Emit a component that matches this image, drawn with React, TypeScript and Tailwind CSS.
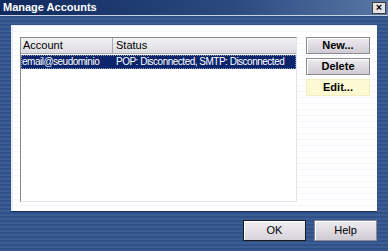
import React from 'react';

const font = { fontFamily: '"Liberation Sans", Arial, sans-serif' };

function Btn({ label, variant = 'normal', className = '' }: { label: string; variant?: 'normal' | 'hover' | 'default'; className?: string }) {
  const look =
    variant === 'hover'
      ? 'bg-[#fdf9d2] border border-[#f3eec0]'
      : variant === 'default'
        ? 'bg-[linear-gradient(#f2eff4,#d6d2da)] border border-[#1a1a1a] shadow-[inset_1px_1px_0_#fff]'
        : 'bg-[linear-gradient(#eeebf0,#cfcbd3)] border border-[#8c8a90] shadow-[inset_1px_1px_0_#fff]';
  return (
    <div className={`flex items-center justify-center text-[11px] leading-none text-black ${look} ${className}`}>
      {label}
    </div>
  );
}

export default function App() {
  return (
    <div
      className="w-[388px] h-[251px] flex flex-col overflow-hidden bg-[repeating-linear-gradient(180deg,#2f5088_0px,#2f5088_2px,#3b5d93_2px,#3b5d93_4px)]"
      style={font}
    >
      <div className="h-[16px] flex items-center justify-between pl-[3px] pr-[2px] bg-[linear-gradient(90deg,#10295e,#2a4a80_60%,#5a78a6)] border-b border-[#c8d2e2]">
        <span className="text-white font-bold text-[11px] leading-none">Manage Accounts</span>
        <div className="w-[14px] h-[12px] bg-[#e4e2e6] border border-[#404040] flex items-center justify-center text-[11px] font-bold leading-none text-black">
          ×
        </div>
      </div>

      <div className="flex-1 flex flex-col px-[11px] pt-[9px]">
        <div className="h-[186px] bg-[repeating-linear-gradient(180deg,#ffffff_0px,#ffffff_5px,#f3f6fb_5px,#f3f6fb_6px)] border-l-2 border-t border-[#e8eef8] shadow-[0_1px_0_#1c2f55] flex gap-[9px] pl-[7px] pt-[11px] pr-[7px]">
          <div className="w-[277px] h-[165px] bg-white border border-[#8a8a8a] border-b-[#dfe4ee] border-r-[#dfe4ee] flex flex-col">
            <div className="h-[16px] flex text-[11px] text-black leading-none">
              <div className="w-[92px] flex items-center pl-[2px] bg-[linear-gradient(#f2f1f4,#dcdbe0)] border-r border-b border-[#a8a8b0]">
                Account
              </div>
              <div className="flex-1 flex items-center pl-[3px] bg-[linear-gradient(#f2f1f4,#dcdbe0)] border-b border-[#a8a8b0]">
                Status
              </div>
            </div>
            <div className="mt-[1px] h-[14px] flex items-center text-[10px] tracking-[-0.5px] text-white bg-[#0b246b] outline-1 outline-dotted outline-[#8a9ac0] -outline-offset-1 leading-none">
              <div className="w-[92px] pl-[1px] whitespace-nowrap">email@seudominio</div>
              <div className="flex-1 pl-[3px] whitespace-nowrap">POP: Disconnected, SMTP: Disconnected</div>
            </div>
          </div>
          <div className="flex flex-col gap-[4px]">
            <Btn label="New..." className="w-[64px] h-[17px] font-bold" />
            <Btn label="Delete" className="w-[64px] h-[17px] font-bold" />
            <Btn label="Edit..." variant="hover" className="w-[64px] h-[17px] font-bold" />
          </div>
        </div>

        <div className="flex justify-end gap-[8px] pt-[9px]">
          <Btn label="OK" variant="default" className="w-[63px] h-[21px]" />
          <Btn label="Help" className="w-[63px] h-[21px]" />
        </div>
      </div>
    </div>
  );
}
